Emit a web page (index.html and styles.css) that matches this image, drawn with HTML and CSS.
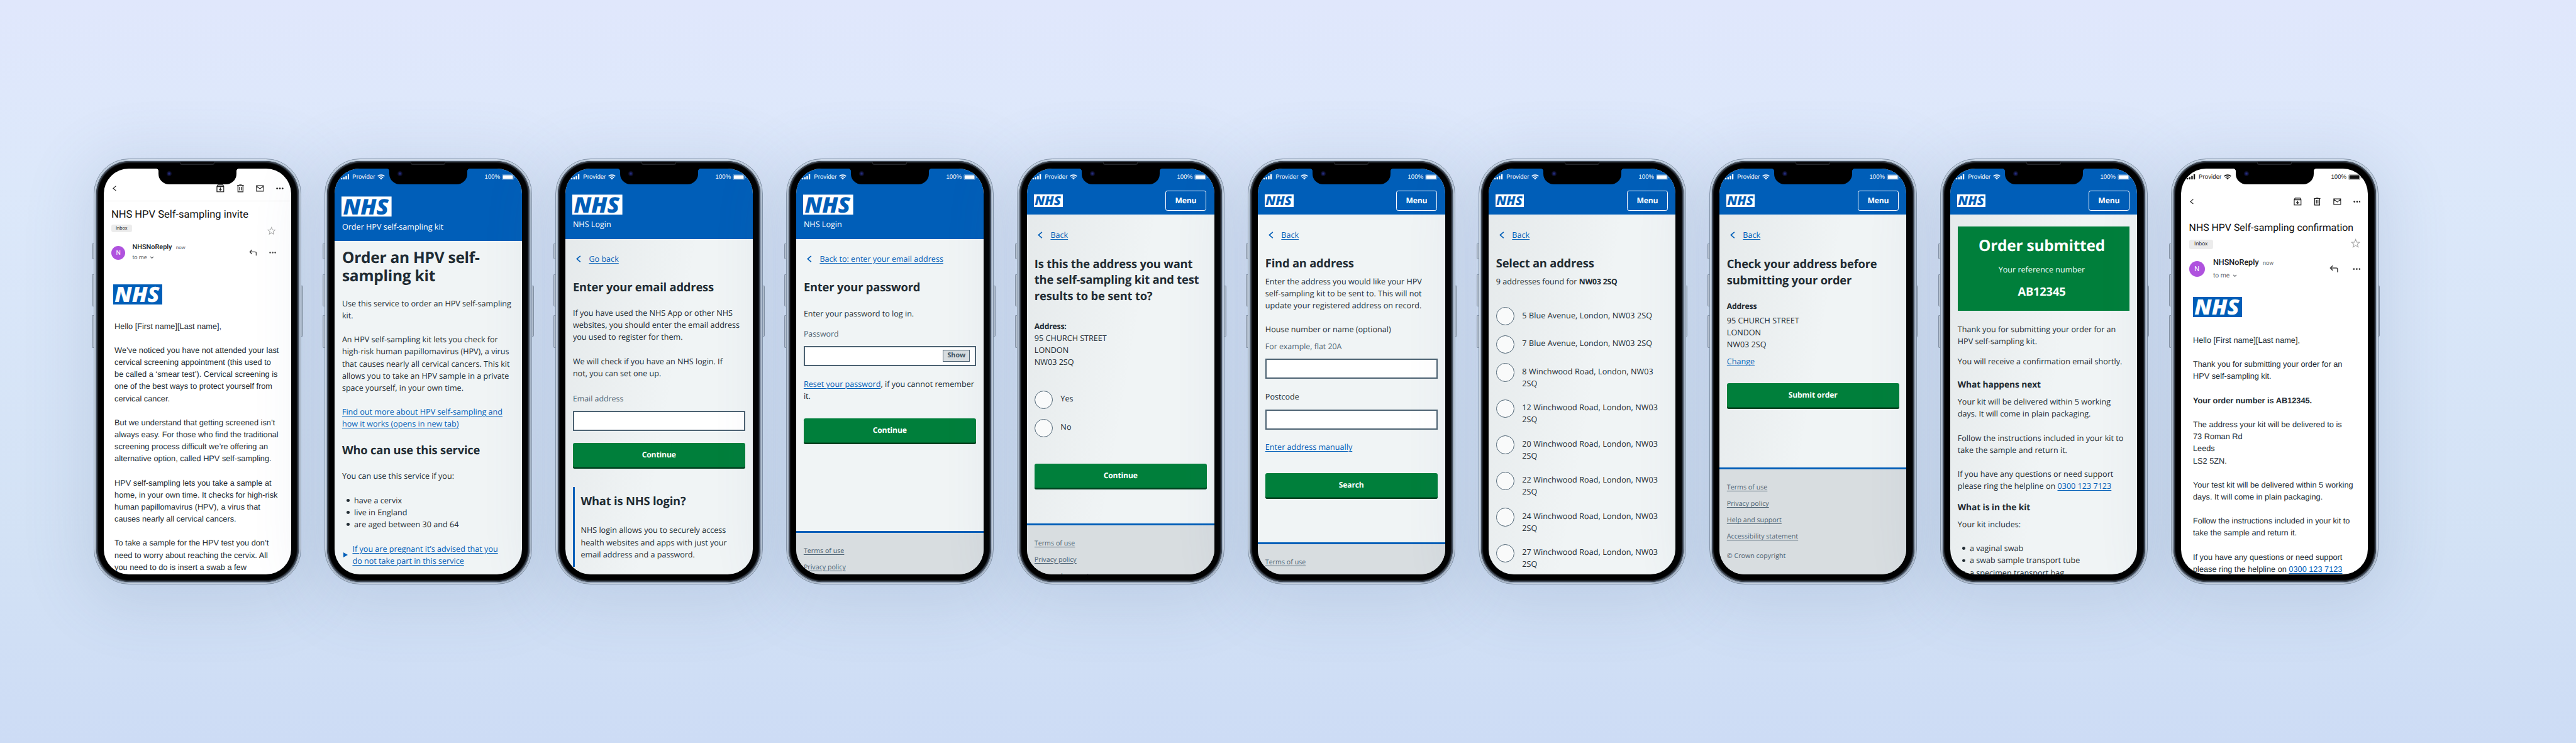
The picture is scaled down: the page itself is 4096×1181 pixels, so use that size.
FILE: index.html
```html
<!DOCTYPE html>
<html lang="en">
<head>
<meta charset="utf-8">
<title>HPV self-sampling journey</title>
<link rel="stylesheet" href="styles.css">
</head>
<body>
<svg class="defs" width="0" height="0" aria-hidden="true">
  <symbol id="signal" viewBox="0 0 18 11"><g fill="currentColor"><rect x="0" y="7.5" width="3" height="3" rx=".6"/><rect x="4.7" y="5.5" width="3" height="5" rx=".6"/><rect x="9.4" y="3" width="3" height="7.5" rx=".6"/><rect x="14.1" y="0" width="3" height="10.5" rx=".6"/></g></symbol>
  <symbol id="wifi" viewBox="0 0 15 11"><g fill="none" stroke="currentColor" stroke-width="2"><path d="M.8 4.1a9.6 9.6 0 0 1 13.4 0"/><path d="M3.4 6.8a5.9 5.9 0 0 1 8.2 0"/></g><path fill="currentColor" d="M5.2 8.4a3.3 3.3 0 0 1 4.6 0L7.5 10.8z"/></symbol>
  <symbol id="battery" viewBox="0 0 27 12"><rect x=".5" y=".5" width="23" height="10.5" rx="2.3" fill="none" stroke="currentColor" opacity=".4"/><rect x="2" y="2" width="20" height="7.5" rx="1" fill="currentColor"/><path d="M25 4v4q1.6-.7 1.6-2T25 4" fill="currentColor" opacity=".45"/></symbol>
  <symbol id="nhs" viewBox="0 0 100 40"><rect class="nhs-bg" width="100" height="40"/><text class="nhs-text" x="3" y="35.4" textLength="91" lengthAdjust="spacingAndGlyphs">NHS</text></symbol>
  <symbol id="chev" viewBox="0 0 10 14"><path d="M8.6 1 1.6 7l7 6" fill="none" stroke="currentColor" stroke-width="2"/></symbol>
  <symbol id="archive" viewBox="0 0 16 16"><path d="M1.2 4.2 3 1h10l1.8 3.2V15H1.2zM1.2 4.4h13.6" fill="none" stroke="currentColor" stroke-width="1.6"/><path d="M8 6.3v5M5.4 9.2 8 11.9l2.6-2.7" fill="none" stroke="currentColor" stroke-width="1.6"/></symbol>
  <symbol id="bin" viewBox="0 0 16 16"><path d="M1.5 2h13M5.5 1.2h5M3 2.5V15h10V2.5M6.4 5v7M9.6 5v7" fill="none" stroke="currentColor" stroke-width="1.7"/></symbol>
  <symbol id="mail" viewBox="0 0 18 16"><path d="M1.2 2h15.6v12.4H1.2zM1.5 3.2 9 9l7.500-5.800" fill="none" stroke="currentColor" stroke-width="1.6"/></symbol>
  <symbol id="dots" viewBox="0 0 16 4"><g fill="currentColor"><circle cx="2.2" cy="2" r="1.8"/><circle cx="8" cy="2" r="1.8"/><circle cx="13.8" cy="2" r="1.8"/></g></symbol>
  <symbol id="star" viewBox="0 0 20 20"><path d="M10 2l2.300 5.700 6.200.4-4.800 3.900 1.600 6L10 14.700 4.700 18l1.600-6L1.500 8.100l6.200-.4z" fill="none" stroke="#a9a9a9" stroke-width="1.500"/></symbol>
  <symbol id="reply" viewBox="0 0 18 16"><path d="M6.500 1.500 1.800 6.300l4.700 4.800M2 6.300h11.500q2.700 0 2.700 2.700v5.800" fill="none" stroke="currentColor" stroke-width="2"/></symbol>
  <symbol id="down" viewBox="0 0 10 6"><path d="m1.500 1 3.500 3.500L8.500 1" fill="none" stroke="currentColor" stroke-width="1.500"/></symbol>
</svg>
<main class="stage">

<section class="phone"><div class="keys-left"><i></i><i></i><i></i></div><div class="key-right"></div><div class="bezel"><div class="notch"><i class="speaker"></i><i class="camera"></i></div>
<div class="screen mail">
  <div class="toolbar ruled"><svg class="back-ico"><use href="#chev"/></svg><svg><use href="#archive"/></svg><svg><use href="#bin"/></svg><svg><use href="#mail"/></svg><svg class="dots"><use href="#dots"/></svg></div>
  <div class="mail-head small">
    <h1>NHS HPV Self-sampling invite</h1>
    <div class="tags"><span>Inbox</span><svg><use href="#star"/></svg></div>
    <div class="sender"><b class="avatar">N</b><div class="who"><div><strong>NHSNoReply</strong><small>now</small></div><div class="to">to me <svg><use href="#down"/></svg></div></div><svg class="reply"><use href="#reply"/></svg><svg class="dots"><use href="#dots"/></svg></div>
  </div>
  <div class="mail-body first">
    <svg class="logo inv"><use href="#nhs"/></svg>
    <p class="mt31">Hello [First name][Last name],</p>
    <p class="mt24">We’ve noticed you have not attended your last<br>cervical screening appointment (this used to<br>be called a ‘smear test’). Cervical screening is<br>one of the best ways to protect yourself from<br>cervical cancer.</p>
    <p class="mt24">But we understand that getting screened isn’t<br>always easy. For those who find the traditional<br>screening process difficult we’re offering an<br>alternative option, called HPV self-sampling.</p>
    <p class="mt24">HPV self-sampling lets you take a sample at<br>home, in your own time. It checks for high-risk<br>human papillomavirus (HPV), a virus that<br>causes nearly all cervical cancers.</p>
    <p class="mt24">To take a sample for the HPV test you don’t<br>need to worry about reaching the cervix. All<br>you need to do is insert a swab a few</p>
  </div>
</div></div></section>

<section class="phone"><div class="keys-left"><i></i><i></i><i></i></div><div class="key-right"></div><div class="bezel"><div class="notch"><i class="speaker"></i><i class="camera"></i></div>
<div class="screen nhs">
  <header class="blue service"><div class="status"><svg class="sig"><use href="#signal"/></svg><span>Provider</span><svg class="wifi"><use href="#wifi"/></svg><span class="pct">100%</span><svg class="bat"><use href="#battery"/></svg></div><svg class="logo"><use href="#nhs"/></svg><span class="name">Order HPV self-sampling kit</span></header>
  <div class="content">
    <h1 class="xl mt16">Order an HPV self-<br>sampling kit</h1>
    <p class="mt24">Use this service to order an HPV self-sampling<br>kit.</p>
    <p class="mt24">An HPV self-sampling kit lets you check for<br>high-risk human papillomavirus (HPV), a virus<br>that causes nearly all cervical cancers. This kit<br>allows you to take an HPV sample in a private<br>space yourself, in your own time.</p>
    <p class="mt24"><a>Find out more about HPV self-sampling and<br>how it works (opens in new tab)</a></p>
    <h2 class="mt25">Who can use this service</h2>
    <p class="mt23">You can use this service if you:</p>
    <ul class="mt24"><li>have a cervix</li><li>live in England</li><li>are aged between 30 and 64</li></ul>
    <div class="details mt25"><a>If you are pregnant it’s advised that you<br>do not take part in this service</a></div>
  </div>
</div></div></section>

<section class="phone"><div class="keys-left"><i></i><i></i><i></i></div><div class="key-right"></div><div class="bezel"><div class="notch"><i class="speaker"></i><i class="camera"></i></div>
<div class="screen nhs shade">
  <header class="blue login"><div class="status"><svg class="sig"><use href="#signal"/></svg><span>Provider</span><svg class="wifi"><use href="#wifi"/></svg><span class="pct">100%</span><svg class="bat"><use href="#battery"/></svg></div><svg class="logo"><use href="#nhs"/></svg><span class="name">NHS Login</span></header>
  <div class="content">
    <div class="back mt27"><svg><use href="#chev"/></svg><a>Go back</a></div>
    <h1 class="mt29">Enter your email address</h1>
    <p class="mt23">If you have used the NHS App or other NHS<br>websites, you should enter the email address<br>you used to register for them.</p>
    <p class="mt24">We will check if you have an NHS login. If<br>not, you can set one up.</p>
    <p class="hint mt26">Email address</p>
    <div class="input mt13"></div>
    <div class="button mt24">Continue</div>
    <div class="inset mt37"><h2>What is NHS login?</h2><p class="mt30">NHS login allows you to securely access<br>health websites and apps with just your<br>email address and a password.</p></div>
  </div>
</div></div></section>

<section class="phone"><div class="keys-left"><i></i><i></i><i></i></div><div class="key-right"></div><div class="bezel"><div class="notch"><i class="speaker"></i><i class="camera"></i></div>
<div class="screen nhs">
  <header class="blue login"><div class="status"><svg class="sig"><use href="#signal"/></svg><span>Provider</span><svg class="wifi"><use href="#wifi"/></svg><span class="pct">100%</span><svg class="bat"><use href="#battery"/></svg></div><svg class="logo"><use href="#nhs"/></svg><span class="name">NHS Login</span></header>
  <div class="content grow">
    <div class="back mt27"><svg><use href="#chev"/></svg><a>Back to: enter your email address</a></div>
    <h1 class="mt29">Enter your password</h1>
    <p class="mt24">Enter your password to log in.</p>
    <p class="hint mt16">Password</p>
    <div class="input mt13"><span class="show">Show</span></div>
    <p class="mt24"><a>Reset your password</a>, if you cannot remember<br>it.</p>
    <div class="button mt32">Continue</div>
  </div>
  <footer class="foot f4"><a>Terms of use</a><a>Privacy policy</a></footer>
</div></div></section>

<section class="phone"><div class="keys-left"><i></i><i></i><i></i></div><div class="key-right"></div><div class="bezel"><div class="notch"><i class="speaker"></i><i class="camera"></i></div>
<div class="screen nhs shade">
  <header class="blue menu"><div class="status"><svg class="sig"><use href="#signal"/></svg><span>Provider</span><svg class="wifi"><use href="#wifi"/></svg><span class="pct">100%</span><svg class="bat"><use href="#battery"/></svg></div><div class="bar"><svg class="logo"><use href="#nhs"/></svg><b class="menu-btn">Menu</b></div></header>
  <div class="content grow">
    <div class="back mt29"><svg><use href="#chev"/></svg><a>Back</a></div>
    <h1 class="mt29">Is this the address you want<br>the self-sampling kit and test<br>results to be sent to?</h1>
    <p class="mt32"><b>Address:</b><br>95 CHURCH STREET<br>LONDON<br>NW03 2SQ</p>
    <div class="radios mt45"><div><i></i><span>Yes</span></div><div><i></i><span>No</span></div></div>
    <div class="button mt50">Continue</div>
  </div>
  <footer class="foot f5"><a>Terms of use</a><a>Privacy policy</a><a>Help and support</a></footer>
</div></div></section>

<section class="phone"><div class="keys-left"><i></i><i></i><i></i></div><div class="key-right"></div><div class="bezel"><div class="notch"><i class="speaker"></i><i class="camera"></i></div>
<div class="screen nhs">
  <header class="blue menu"><div class="status"><svg class="sig"><use href="#signal"/></svg><span>Provider</span><svg class="wifi"><use href="#wifi"/></svg><span class="pct">100%</span><svg class="bat"><use href="#battery"/></svg></div><div class="bar"><svg class="logo"><use href="#nhs"/></svg><b class="menu-btn">Menu</b></div></header>
  <div class="content grow">
    <div class="back mt28"><svg><use href="#chev"/></svg><a>Back</a></div>
    <h1 class="mt29">Find an address</h1>
    <p class="mt8">Enter the address you would like your HPV<br>self-sampling kit to be sent to. This will not<br>update your registered address on record.</p>
    <p class="mt24">House number or name (optional)</p>
    <p class="hint mt9">For example, flat 20A</p>
    <div class="input mt13"></div>
    <p class="mt24">Postcode</p>
    <div class="input mt13"></div>
    <p class="mt23"><a>Enter address manually</a></p>
    <div class="button mt40">Search</div>
  </div>
  <footer class="foot f6"><a>Terms of use</a></footer>
</div></div></section>

<section class="phone"><div class="keys-left"><i></i><i></i><i></i></div><div class="key-right"></div><div class="bezel"><div class="notch"><i class="speaker"></i><i class="camera"></i></div>
<div class="screen nhs shade">
  <header class="blue menu"><div class="status"><svg class="sig"><use href="#signal"/></svg><span>Provider</span><svg class="wifi"><use href="#wifi"/></svg><span class="pct">100%</span><svg class="bat"><use href="#battery"/></svg></div><div class="bar"><svg class="logo"><use href="#nhs"/></svg><b class="menu-btn">Menu</b></div></header>
  <div class="content">
    <div class="back mt28"><svg><use href="#chev"/></svg><a>Back</a></div>
    <h1 class="mt29">Select an address</h1>
    <p class="mt8">9 addresses found for <b>NW03 2SQ</b></p>
    <div class="radios mt39">
      <div><i></i><span>5 Blue Avenue, London, NW03 2SQ</span></div>
      <div><i></i><span>7 Blue Avenue, London, NW03 2SQ</span></div>
      <div><i></i><span>8 Winchwood Road, London, NW03<br>2SQ</span></div>
      <div><i></i><span>12 Winchwood Road, London, NW03<br>2SQ</span></div>
      <div><i></i><span>20 Winchwood Road, London, NW03<br>2SQ</span></div>
      <div><i></i><span>22 Winchwood Road, London, NW03<br>2SQ</span></div>
      <div><i></i><span>24 Winchwood Road, London, NW03<br>2SQ</span></div>
      <div><i></i><span>27 Winchwood Road, London, NW03<br>2SQ</span></div>
    </div>
  </div>
</div></div></section>

<section class="phone"><div class="keys-left"><i></i><i></i><i></i></div><div class="key-right"></div><div class="bezel"><div class="notch"><i class="speaker"></i><i class="camera"></i></div>
<div class="screen nhs shade">
  <header class="blue menu"><div class="status"><svg class="sig"><use href="#signal"/></svg><span>Provider</span><svg class="wifi"><use href="#wifi"/></svg><span class="pct">100%</span><svg class="bat"><use href="#battery"/></svg></div><div class="bar"><svg class="logo"><use href="#nhs"/></svg><b class="menu-btn">Menu</b></div></header>
  <div class="content grow">
    <div class="back mt29"><svg><use href="#chev"/></svg><a>Back</a></div>
    <h1 class="mt30">Check your address before<br>submitting your order</h1>
    <p class="mt23"><b>Address</b></p>
    <p class="mt5">95 CHURCH STREET<br>LONDON<br>NW03 2SQ</p>
    <p class="mt9"><a>Change</a></p>
    <div class="button mt32">Submit order</div>
  </div>
  <footer class="foot f8"><a>Terms of use</a><a>Privacy policy</a><a>Help and support</a><a>Accessibility statement</a><span>© Crown copyright</span></footer>
</div></div></section>

<section class="phone"><div class="keys-left"><i></i><i></i><i></i></div><div class="key-right"></div><div class="bezel"><div class="notch"><i class="speaker"></i><i class="camera"></i></div>
<div class="screen nhs shade">
  <header class="blue menu"><div class="status"><svg class="sig"><use href="#signal"/></svg><span>Provider</span><svg class="wifi"><use href="#wifi"/></svg><span class="pct">100%</span><svg class="bat"><use href="#battery"/></svg></div><div class="bar"><svg class="logo"><use href="#nhs"/></svg><b class="menu-btn">Menu</b></div></header>
  <div class="content">
    <div class="panel mt24"><h1>Order submitted</h1><p class="mt15">Your reference number</p><h2 class="mt16">AB12345</h2></div>
    <p class="mt24">Thank you for submitting your order for an<br>HPV self-sampling kit.</p>
    <p class="mt16">You will receive a confirmation email shortly.</p>
    <h3 class="mt21">What happens next</h3>
    <p class="mt8">Your kit will be delivered within 5 working<br>days. It will come in plain packaging.</p>
    <p class="mt24">Follow the instructions included in your kit to<br>take the sample and return it.</p>
    <p class="mt24">If you have any questions or need support<br>please ring the helpline on <a>0300 123 7123</a></p>
    <h3 class="mt17">What is in the kit</h3>
    <p class="mt7">Your kit includes:</p>
    <ul class="mt24"><li>a vaginal swab</li><li>a swab sample transport tube</li><li>a specimen transport bag</li></ul>
  </div>
</div></div></section>

<section class="phone"><div class="keys-left"><i></i><i></i><i></i></div><div class="key-right"></div><div class="bezel"><div class="notch"><i class="speaker"></i><i class="camera"></i></div>
<div class="screen mail">
  <div class="status dark"><svg class="sig"><use href="#signal"/></svg><span>Provider</span><svg class="wifi"><use href="#wifi"/></svg><span class="pct">100%</span><svg class="bat"><use href="#battery"/></svg></div>
  <div class="toolbar"><svg class="back-ico"><use href="#chev"/></svg><svg><use href="#archive"/></svg><svg><use href="#bin"/></svg><svg><use href="#mail"/></svg><svg class="dots"><use href="#dots"/></svg></div>
  <div class="mail-head large">
    <h1>NHS HPV Self-sampling confirmation</h1>
    <div class="tags"><span>Inbox</span><svg><use href="#star"/></svg></div>
    <div class="sender"><b class="avatar">N</b><div class="who"><div><strong>NHSNoReply</strong><small>now</small></div><div class="to">to me <svg><use href="#down"/></svg></div></div><svg class="reply"><use href="#reply"/></svg><svg class="dots"><use href="#dots"/></svg></div>
  </div>
  <div class="mail-body last">
    <svg class="logo inv"><use href="#nhs"/></svg>
    <p class="mt33">Hello [First name][Last name],</p>
    <p class="mt24">Thank you for submitting your order for an<br>HPV self-sampling kit.</p>
    <p class="mt24"><b>Your order number is AB12345.</b></p>
    <p class="mt24">The address your kit will be delivered to is<br>73 Roman Rd<br>Leeds<br>LS2 5ZN.</p>
    <p class="mt24">Your test kit will be delivered within 5 working<br>days. It will come in plain packaging.</p>
    <p class="mt24">Follow the instructions included in your kit to<br>take the sample and return it.</p>
    <p class="mt24">If you have any questions or need support<br>please ring the helpline on <a>0300 123 7123</a></p>
  </div>
</div></div></section>

</main>
</body>
</html>
```
FILE: styles.css
```css
* { box-sizing: border-box; margin: 0; padding: 0; }
html, body { width: 4096px; height: 1181px; overflow: hidden; }
body { background: linear-gradient(#e0e7fc 0%, #dce8fa 25%, #d3e2f5 72%, #cddcf5 100%); text-rendering: geometricPrecision; }
.defs { display: none; }

/* Artboard is 4163 x 1200, shown slightly reduced */
.stage { zoom: .98391; width: 4163px; height: 1200px; display: flex; gap: 38px; padding: 256px 0 0 151.5px; align-items: flex-start; }

/* Device frame */
.phone { position: relative; flex: none; width: 335px; height: 688px; border-radius: 57px; border: 1px solid #8393a8;
  background: linear-gradient(#b3c2d4, #9aa9bd 12%, #9fadc0 90%, #8796aa);
  box-shadow: 0 16px 100px 16px rgba(90, 110, 155, .16), inset 0 0 2px 1px #dbe5f0; }
.bezel { position: relative; margin: 3px; width: 327px; height: 680px; border-radius: 54px; background: #000; box-shadow: inset 0 0 2px 2px #4b5563; }
.notch { position: absolute; z-index: 2; left: 100.500px; top: 6px; width: 126px; height: 32px; background: #000; border-radius: 0 0 17px 17px; }
.notch::before, .notch::after { content: ""; position: absolute; top: 6px; width: 4px; height: 4px; }
.notch::before { right: 100%; background: radial-gradient(circle at 0 100%, transparent 3.800px, #000 4px); }
.notch::after { left: 100%; background: radial-gradient(circle at 100% 100%, transparent 3.800px, #000 4px); }
.speaker { position: absolute; left: 35px; top: -5px; width: 56px; height: 5px; border-radius: 0 0 3px 3px; background: #0b0b0d; border: 1px solid #26282c; border-top: 0; }
.camera { position: absolute; left: 13.500px; top: 10.500px; width: 8px; height: 8px; border-radius: 50%; background: radial-gradient(#242c7c 0 15%, #11133a 45%, #07070f 80%); }
.keys-left i, .key-right { position: absolute; background: #b3bfce; border: 1px solid #8391a5; }
.keys-left i { left: -4px; width: 3px; border-right: 0; border-radius: 2px 0 0 2px; }
.keys-left i:nth-child(1) { top: 136px; height: 26px; }
.keys-left i:nth-child(2) { top: 186px; height: 52px; }
.keys-left i:nth-child(3) { top: 252px; height: 53px; }
.key-right { right: -4px; width: 3px; top: 204px; height: 83px; border-left: 0; border-radius: 0 2px 2px 0; }

/* Screens are 373 x 808 at 0.811 */
.screen { zoom: .811; position: absolute; left: 15px; top: 15px; width: 373px; height: 808px; border-radius: 50px; overflow: hidden; display: flex; flex-direction: column; white-space: nowrap; font: 15.800px/24px "Open Sans", sans-serif; color: #212b32; background: #f0f4f5; }
.shade .content { background: linear-gradient(100deg, rgba(33, 43, 50, .05), transparent 55%); }
.content { padding: 0 15px; flex: 1; }

.status { display: flex; align-items: center; flex: none; height: 34px; padding: 0 12px; font: 12px/14px "Liberation Sans", sans-serif; letter-spacing: .1px; color: #fff; }
.status svg { flex: none; }
.sig { width: 17.500px; height: 11px; margin-right: 6px; }
.wifi { width: 15px; height: 11px; margin-left: 4px; }
.pct { margin-left: auto; }
.bat { width: 27px; height: 12px; margin-left: 4px; }
.dark { color: #111; }

.blue { background: #005eb8; color: #fff; flex: none; }
.service { height: 145px; }
.login { height: 141px; }
.menu { height: 92px; }
.blue > .logo { display: block; margin: 17.500px 15px 0 14px; }
.service > .logo { margin-top: 22px; }
.name { display: block; margin: 7px 0 0 15px; }
.logo { width: 100px; height: 41px; flex: none; }
.nhs-bg { fill: var(--bg, #fff); }
.nhs-text { font: italic 800 43px "Open Sans", sans-serif; fill: var(--ink, #005eb8); }
.inv { --bg: #005eb8; --ink: #fff; background: #005eb8; }
.bar { display: flex; justify-content: space-between; align-items: flex-start; padding: 10px 16px 0 14px; }
.bar .logo { width: 57px; height: 25px; margin-top: 7.500px; background: #fff; }
.menu-btn { width: 81px; height: 40px; border: 1.300px solid #fff; border-radius: 4px; text-align: center; line-height: 38px; }

h1, h2 { font-size: 23px; line-height: 32px; font-weight: 700; letter-spacing: -.25px; }
.xl { font-size: 30.700px; line-height: 36px; letter-spacing: -.3px; }
h3 { font-size: 17.300px; line-height: 28px; font-weight: 700; letter-spacing: -.14px; }
.nhs b, .button { font-size: 15.300px; font-weight: 700; letter-spacing: -.22px; }
a { color: #005eb8; text-decoration: underline; text-decoration-thickness: 1.300px; text-underline-offset: 3px; }
.hint { color: #4c6272; font-size: 15.500px; }
ul { list-style: none; }
li { padding-left: 24px; display: flex; align-items: center; }
li::before { content: ""; width: 6px; height: 6px; border-radius: 50%; background: #212b32; margin: 0 9px 0 -15px; }
.details { display: flex; align-items: center; gap: 9px; padding-left: 3px; }
.details::before { content: ""; border: 5.500px solid transparent; border-left: 9px solid #005eb8; border-right: 0; }
.back { display: flex; align-items: center; gap: 15px; padding-left: 7px; }
.back svg { width: 10px; height: 14px; color: #005eb8; }
.input { height: 40px; border: 2.600px solid #4c6272; background: #fff; display: flex; justify-content: flex-end; padding: 5px 9px; }
.show { width: 54px; height: 23px; border: 1.500px solid #4c6272; background: #d8dde0; color: #3f525f; font-size: 13.500px; line-height: 20px; font-weight: 700; text-align: center; }
.button { height: 51px; border-radius: 4px; background: #007f3b; box-shadow: inset 0 -3px #00401e; color: #fff; text-align: center; line-height: 47px; }
.inset { border-left: 4px solid #005eb8; padding: 12px 0 13px 12px; }
.radios > div { display: flex; min-height: 40px; margin-bottom: 16px; }
.radios i { flex: none; width: 37px; height: 37px; border: 1.500px solid #4c6272; border-radius: 50%; background: #f9fafa; }
.radios span { padding: 4.500px 0 3.500px 15px; letter-spacing: .1px; }
.foot { flex: none; background: #d8dde0; border-top: 4px solid #005eb8; padding: 24.500px 15px 0; display: flex; flex-direction: column; gap: 8.800px; font-size: 13.400px; color: #4c6272; overflow: hidden; }
.foot a { color: #4c6272; }
.foot span { margin-top: 6px; }
.f4 { height: 85.500px; }
.f5 { height: 100.500px; }
.f6 { height: 63px; }
.f8 { height: 212px; }
.panel { height: 168px; background: #007f3b; color: #fff; text-align: center; padding: 19px 8px 0 0; }
.panel h1 { font-size: 30.700px; line-height: 40px; letter-spacing: -.3px; }

/* Mail screens */
.mail { background: #fff; font-size: 16px; }
.toolbar { height: 65px; flex: none; display: flex; align-items: center; padding: 15px 15px 0 18px; gap: 23.500px; color: #222; }
.ruled { border-bottom: 1.500px solid #eee; }
.toolbar svg { width: 16px; height: 16px; flex: none; }
.toolbar .back-ico { width: 8px; height: 11px; margin-right: auto; }
.toolbar .dots { width: 15px; height: 4px; }
.status + .toolbar { padding-top: 0; }
.mail-head { flex: none; padding: 0 15px; font-family: Roboto, sans-serif; }
.mail-head h1 { line-height: 24px; font-weight: 400; letter-spacing: 0; color: #111; }
.tags { display: flex; justify-content: space-between; }
.tags span { background: #ececec; border-radius: 4px; text-align: center; color: #333; }
.sender { display: flex; align-items: center; color: #5f6368; }
.avatar { border-radius: 50%; background: #af52de; color: #fff; font-weight: 400; text-align: center; }
.who { flex: 1; }
.who strong { font-weight: 500; color: #222; }
.reply { width: 18px; height: 16px; color: #444; }
.sender .dots { width: 16px; height: 4px; color: #444; }
.to svg { width: 9px; height: 6px; margin-left: 3px; vertical-align: 1px; }
.small h1 { margin-top: 16px; font-size: 20.700px; }
.small .tags { margin-top: 7px; height: 15px; padding-right: 15px; font-size: 9.500px; line-height: 15px; }
.small .tags span { width: 41px; }
.small .tags svg { width: 17px; height: 17px; margin-top: 3px; }
.small .sender { height: 42px; margin-top: 20px; font-size: 11.500px; line-height: 20px; padding-right: 14px; gap: 14px; }
.small .avatar { width: 28px; height: 28px; font-size: 13px; line-height: 28px; }
.small strong { font-size: 13.700px; }
.small small { font-size: 10px; margin-left: 8px; }
.small .reply { width: 16px; height: 14px; margin-right: 11px; }
.small .sender .dots { width: 14px; }
.large { padding: 0 15px 0 16px; margin-top: 7px; }
.large h1 { font-size: 19.900px; }
.large .tags { margin-top: 12px; height: 18.500px; font-size: 11px; line-height: 18px; }
.large .tags span { width: 48px; }
.large .tags svg { width: 19px; height: 19px; margin-top: -2px; }
.large .sender { height: 50px; margin-top: 15px; font-size: 13px; line-height: 24px; gap: 16px; }
.large .avatar { width: 32px; height: 32px; font-size: 14px; line-height: 32px; }
.large strong { font-size: 15.800px; }
.large small { font-size: 11.500px; margin-left: 8px; }
.large .reply { margin-right: 12px; }
.mail-body { font-family: "Liberation Sans", sans-serif; }
.mail-body .logo { display: block; width: 98px; height: 40px; margin-left: -3px; }
.mail-body.last .logo { margin-left: 0; }
.first { padding: 41.500px 0 0 21.500px; }
.last { padding: 31px 0 0 24px; }

/* Vertical rhythm */
.mt5 { margin-top: 5px; }
.mt7 { margin-top: 7px; }
.mt8 { margin-top: 8px; }
.mt9 { margin-top: 9px; }
.mt13 { margin-top: 13px; }
.mt15 { margin-top: 14.500px; }
.mt16 { margin-top: 16px; }
.mt17 { margin-top: 17px; }
.mt21 { margin-top: 21px; }
.mt23 { margin-top: 23px; }
.mt24 { margin-top: 24px; }
.mt25 { margin-top: 25px; }
.mt26 { margin-top: 26px; }
.mt27 { margin-top: 27px; }
.mt28 { margin-top: 28px; }
.mt29 { margin-top: 29px; }
.mt30 { margin-top: 30px; }
.mt31 { margin-top: 31.500px; }
.mt32 { margin-top: 32px; }
.mt33 { margin-top: 33.500px; }
.mt37 { margin-top: 37px; }
.mt39 { margin-top: 39px; }
.mt40 { margin-top: 40.500px; }
.mt45 { margin-top: 44.500px; }
.mt50 { margin-top: 50px; }
```
